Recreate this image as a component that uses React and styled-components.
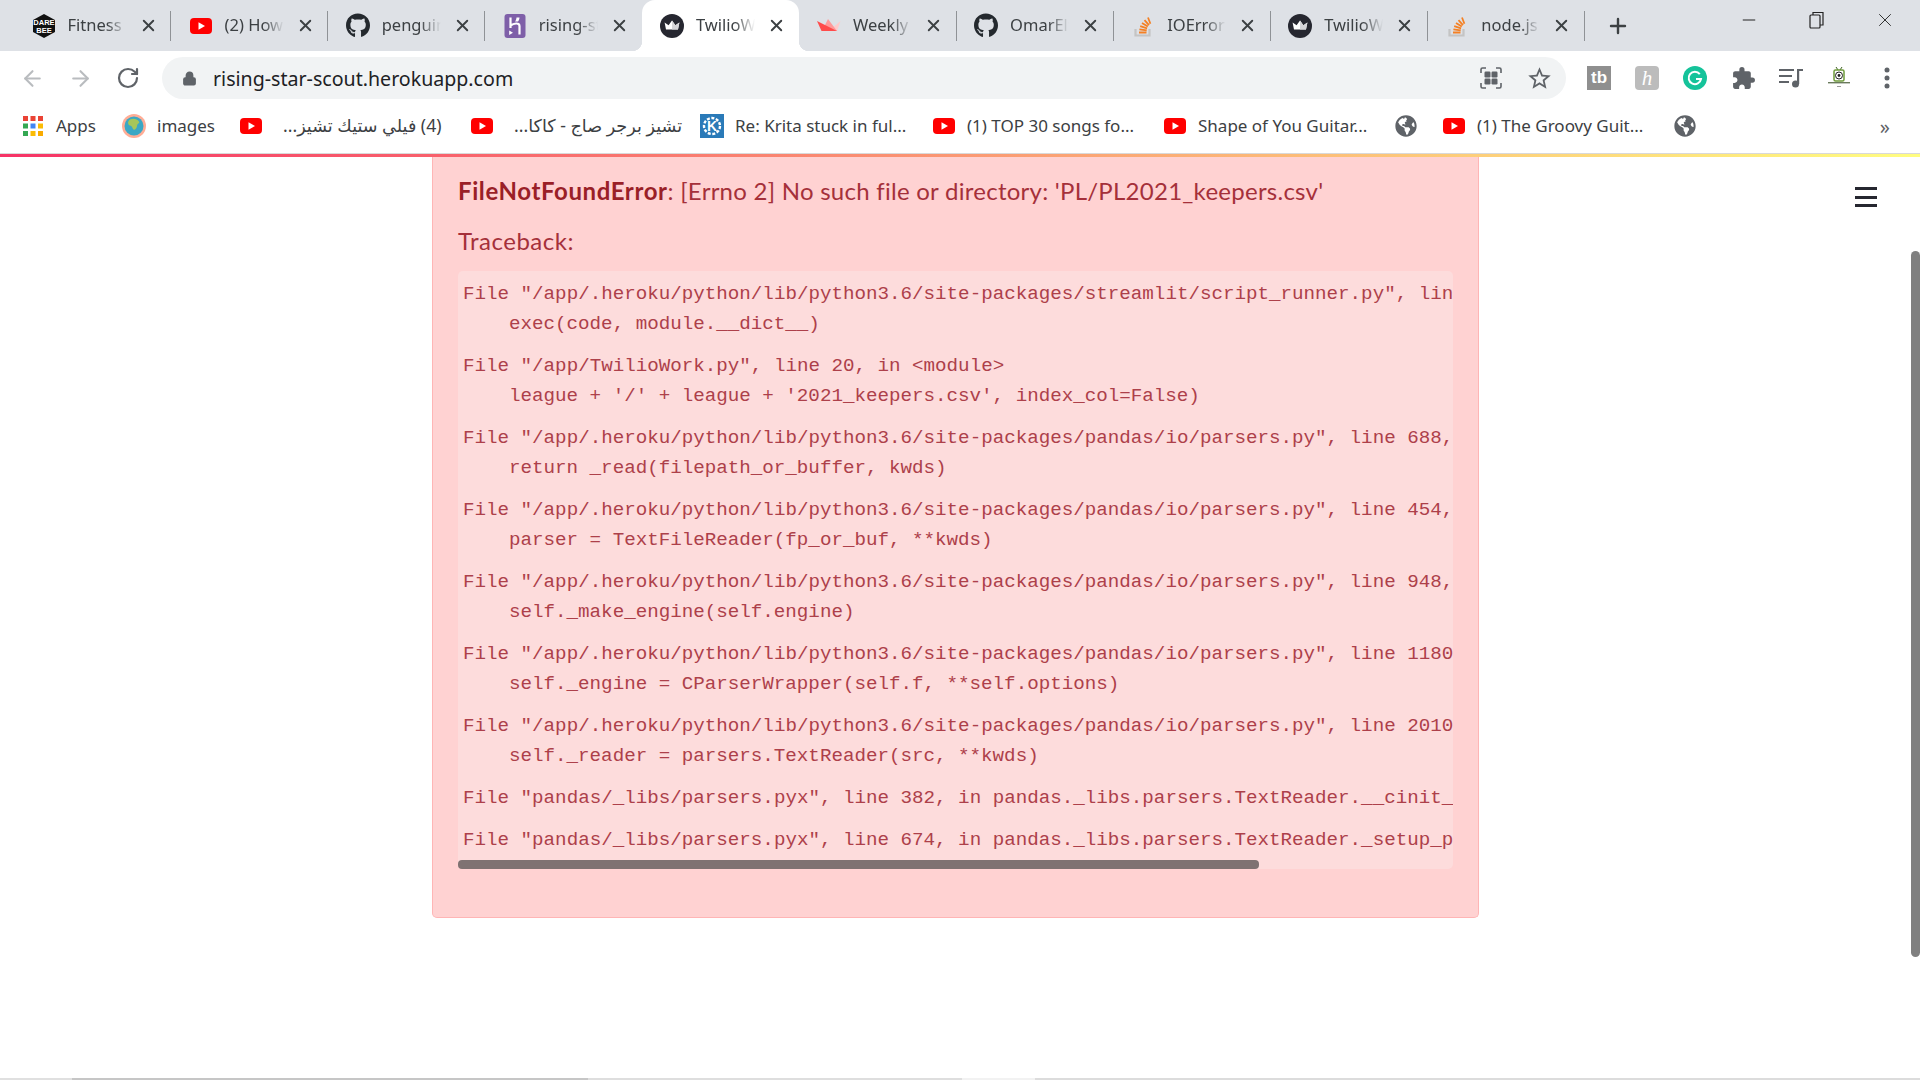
import React from "react";
import styled, { createGlobalStyle } from "styled-components";
import { FaGithub, FaGlobeAmericas } from "react-icons/fa";
import { MdExtension, MdStarBorder } from "react-icons/md";
import { ArrowLeft, ArrowRight, RotateCw, Lock, X, Plus, Minus } from "lucide-react";

const GlobalStyle = createGlobalStyle`
  html, body {
    margin: 0;
    padding: 0;
    height: 100%;
    background: #fff;
    overflow: hidden;
  }
  * {
    box-sizing: border-box;
  }
`;

const Youtube = () => (
  <svg width="24" height="24" viewBox="0 0 24 24">
    <rect x="1" y="4" width="22" height="16" rx="4" fill="#ff0000" />
    <path d="M9.500 8.200v7.600l6.500-3.800z" fill="#fff" />
  </svg>
);

const Crown = () => (
  <svg width="24" height="24" viewBox="0 0 24 24">
    <circle cx="12" cy="12" r="12" fill="#262730" />
    <path d="M6 15.500 4.600 8.600l4 2.600L12 6.400l3.400 4.800 4-2.600L18 15.500z" fill="#fff" />
    <path d="M12 6.400l3.400 4.800 4-2.600L18 15.500h-6z" fill="#d5d5d8" />
  </svg>
);

const Boat = () => (
  <svg width="24" height="24" viewBox="0 0 24 24">
    <path d="M23.500 7 20 17h-8z" fill="#ffcaca" />
    <path d="M11 5 5 17h15z" fill="#ff9a9a" />
    <path d="M0 7l4.500 10H20z" fill="#ff4b4b" />
  </svg>
);

const Stack = () => (
  <svg width="24" height="24" viewBox="0 0 24 24">
    <path d="M4.500 15v6.500h14V15" fill="none" stroke="#c4c4c4" strokeWidth="2.200" />
    <path d="M8 18.500h7.500M8.400 15.300l7.300 1M9.200 12.200l6.900 2.200M11 9l5.800 3.600M13.500 6.200l4.500 5M17 3.500l2.400 6.200" stroke="#f48024" strokeWidth="1.800" fill="none" />
  </svg>
);

const Dare = () => (
  <svg width="24" height="24" viewBox="0 0 24 24">
    <path d="M12 0 23 6v12l-11 6-11-6V6z" fill="#111" />
    <text x="12" y="11" textAnchor="middle" fontSize="7.500" fontWeight="700" fill="#fff" fontFamily="Liberation Sans, sans-serif">DARE</text>
    <text x="12" y="18.500" textAnchor="middle" fontSize="7.500" fontWeight="700" fill="#fff" fontFamily="Liberation Sans, sans-serif">BEE</text>
  </svg>
);

const Heroku = () => (
  <svg width="24" height="24" viewBox="0 0 24 24">
    <rect x="1.500" width="21" height="24" rx="3" fill="#7e5fa8" />
    <path d="M7.500 3.500v10.500M7.500 11.500c3-2 9-3.500 9 .5v8.500" fill="none" stroke="#fff" strokeWidth="2.200" />
    <path d="M6.200 16.500l3.800 2.200-3.800 2.300z" fill="#fff" />
    <path d="M13.500 3.500h3c0 1.500-.7 3-1.500 4h-3c.8-1 1.500-2.500 1.500-4z" fill="#fff" />
  </svg>
);

const Earth = () => (
  <svg width="24" height="24" viewBox="0 0 24 24">
    <circle cx="12" cy="12" r="12" fill="#ffad96" />
    <circle cx="12" cy="12" r="9.500" fill="#3ba7c4" />
    <path d="M8 5.500c3-1.500 7-1 9 2 1 2-2 2-2 4.500s-3 5-4 3-1-3-3-3.500-3-4 0-6z" fill="#a5c65a" />
  </svg>
);

const Kde = () => (
  <svg width="24" height="24" viewBox="0 0 24 24">
    <rect width="24" height="24" fill="#2a7ab8" />
    <circle cx="12" cy="12" r="8" fill="none" stroke="#fff" strokeWidth="2.400" strokeDasharray="3 1.600" />
    <text x="12" y="17" textAnchor="middle" fontSize="14" fontWeight="700" fill="#fff" fontFamily="Liberation Sans, sans-serif">K</text>
  </svg>
);

const AppsGrid = () => {
  const colors = ["#ea4335", "#ea4335", "#ea4335", "#34a853", "#4285f4", "#fbbc05", "#34a853", "#fbbc05", "#f9ab00"];
  return (
    <svg width="24" height="24" viewBox="0 0 24 24">
      {colors.map((c, i) => (
        <rect key={i} x={2 + (i % 3) * 7.5} y={2 + Math.floor(i / 3) * 7.5} width="5" height="5" fill={c} />
      ))}
    </svg>
  );
};

const Globe = () => <FaGlobeAmericas size={22} color="#5f6368" />;
const Github = () => <FaGithub size={25} color="#24292e" />;

const tabs = [
  { icon: <Dare />, title: "Fitness Freak" },
  { icon: <Youtube />, title: "(2) How to" },
  { icon: <Github />, title: "penguin-stats" },
  { icon: <Heroku />, title: "rising-star" },
  { icon: <Crown />, title: "TwilioWork", active: true },
  { icon: <Boat />, title: "Weekly" },
  { icon: <Github />, title: "OmarEltouny" },
  { icon: <Stack />, title: "IOError: [Errno" },
  { icon: <Crown />, title: "TwilioWork" },
  { icon: <Stack />, title: "node.js - error" },
];

const bookmarks = [
  { icon: <AppsGrid />, label: "Apps", width: 101 },
  { icon: <Earth />, label: "images", width: 117 },
  { icon: <Youtube />, label: "(4) فيلي ستيك تشيز...", width: 231, rtl: true },
  { icon: <Youtube />, label: "تشيز برجر صاج - كاكا...", width: 230, rtl: true },
  { icon: <Kde />, label: "Re: Krita stuck in ful...", width: 232 },
  { icon: <Youtube />, label: "(1) TOP 30 songs fo...", width: 231 },
  { icon: <Youtube />, label: "Shape of You Guitar...", width: 231 },
  { icon: <Globe />, width: 48 },
  { icon: <Youtube />, label: "(1) The Groovy Guit...", width: 231 },
  { icon: <Globe />, width: 48 },
];

const traces = [
  ['File "/app/.heroku/python/lib/python3.6/site-packages/streamlit/script_runner.py", line 332, in _run_script', "exec(code, module.__dict__)"],
  ['File "/app/TwilioWork.py", line 20, in <module>', "league + '/' + league + '2021_keepers.csv', index_col=False)"],
  ['File "/app/.heroku/python/lib/python3.6/site-packages/pandas/io/parsers.py", line 688, in read_csv', "return _read(filepath_or_buffer, kwds)"],
  ['File "/app/.heroku/python/lib/python3.6/site-packages/pandas/io/parsers.py", line 454, in _read', "parser = TextFileReader(fp_or_buf, **kwds)"],
  ['File "/app/.heroku/python/lib/python3.6/site-packages/pandas/io/parsers.py", line 948, in __init__', "self._make_engine(self.engine)"],
  ['File "/app/.heroku/python/lib/python3.6/site-packages/pandas/io/parsers.py", line 1180, in _make_engine', "self._engine = CParserWrapper(self.f, **self.options)"],
  ['File "/app/.heroku/python/lib/python3.6/site-packages/pandas/io/parsers.py", line 2010, in __init__', "self._reader = parsers.TextReader(src, **kwds)"],
  ['File "pandas/_libs/parsers.pyx", line 382, in pandas._libs.parsers.TextReader.__cinit__'],
  ['File "pandas/_libs/parsers.pyx", line 674, in pandas._libs.parsers.TextReader._setup_parser_source'],
];

const bottomSegments = [
  { width: 72, color: "#e0e0e0" },
  { width: 516, color: "#c6c6c6" },
  { width: 374, color: "#dedede" },
  { width: 73, color: "#f2f2f2" },
  { width: 885, color: "#dcdcdc" },
];

export default function App() {
  return (
    <Browser>
      <GlobalStyle />
      <TabStrip>
        {tabs.map((tab, i) => (
          <Tab key={i} $active={tab.active} $noLine={tabs[i + 1] && tabs[i + 1].active}>
            <Favicon>{tab.icon}</Favicon>
            <TabTitle>{tab.title}</TabTitle>
            <X size={19} strokeWidth={2.4} color="#3c4043" />
          </Tab>
        ))}
        <NewTab>
          <Plus size={24} strokeWidth={2.4} color="#3c4043" />
        </NewTab>
        <WindowControls>
          <WindowButton><Minus size={20} strokeWidth={1.2} color="#222" /></WindowButton>
          <WindowButton>
            <svg width="16" height="18" viewBox="0 0 16 18" fill="none" stroke="#222" strokeWidth="1.200">
              <rect x="1" y="4" width="10" height="13" rx="1" />
              <path d="M4 4V1.500h10V14h-3" />
            </svg>
          </WindowButton>
          <WindowButton><X size={22} strokeWidth={1} color="#222" /></WindowButton>
        </WindowControls>
      </TabStrip>

      <Toolbar>
        <NavButton><ArrowLeft size={25} strokeWidth={2} color="#b9bcbf" /></NavButton>
        <NavButton><ArrowRight size={25} strokeWidth={2} color="#b9bcbf" /></NavButton>
        <NavButton><RotateCw size={24} strokeWidth={2.2} color="#5f6368" /></NavButton>
        <AddressBar>
          <Lock size={15} fill="#5f6368" color="#5f6368" strokeWidth={2.4} />
          <Url>rising-star-scout.herokuapp.com</Url>
          <ActionButton>
            <svg width="22" height="22" viewBox="0 0 22 22" fill="#5f6368">
              <path d="M1 6V2.500A1.500 1.500 0 0 1 2.500 1H6M16 1h3.500A1.500 1.500 0 0 1 21 2.500V6M21 16v3.500a1.500 1.500 0 0 1-1.500 1.500H16M6 21H2.500A1.500 1.500 0 0 1 1 19.500V16" fill="none" stroke="#5f6368" strokeWidth="1.600" />
              <rect x="4.500" y="4.500" width="6" height="6" rx="1.200" />
              <rect x="11.500" y="4.500" width="6" height="6" rx="1.200" />
              <rect x="4.500" y="11.500" width="6" height="6" rx="1.200" />
              <rect x="11.500" y="11.500" width="6" height="6" rx="1.200" />
            </svg>
          </ActionButton>
          <ActionButton><MdStarBorder size={27} color="#5f6368" /></ActionButton>
        </AddressBar>
        <Extensions>
          <ActionButton><ExtSquare $bg="#8f8f8f" $radius="0">tb</ExtSquare></ActionButton>
          <ActionButton><ExtSquare $bg="#bcbcbc" $radius="4px" $serif>h</ExtSquare></ActionButton>
          <ActionButton>
            <svg width="24" height="24" viewBox="0 0 24 24">
              <circle cx="12" cy="12" r="12" fill="#15c39a" />
              <path d="M16.800 8.200A6.200 6.200 0 1 0 18 13h-5" fill="none" stroke="#fff" strokeWidth="2" />
            </svg>
          </ActionButton>
          <ActionButton><MdExtension size={25} color="#5f6368" /></ActionButton>
          <ActionButton>
            <svg width="24" height="24" viewBox="0 0 24 24" fill="#5f6368">
              <rect x="0" y="3" width="15" height="2" />
              <rect x="0" y="9" width="13" height="2" />
              <rect x="0" y="15" width="10" height="2" />
              <rect x="18" y="3" width="6" height="2" />
              <rect x="18" y="3" width="2.200" height="15" />
              <circle cx="16.500" cy="18" r="3.500" />
            </svg>
          </ActionButton>
          <ActionButton>
            <svg width="24" height="24" viewBox="0 0 24 24">
              <path d="M9 1l2 3M15 1l-2 3" stroke="#3d5f22" strokeWidth="1" />
              <rect x="7" y="4" width="10" height="11" rx="1.500" fill="none" stroke="#6d9a3a" strokeWidth="1.500" />
              <circle cx="12" cy="9.500" r="3.500" fill="#fff" stroke="#222" />
              <circle cx="12" cy="9.500" r="1.400" fill="#222" />
              <rect x="1" y="16" width="22" height="1.400" fill="#6a7a5c" />
              <rect x="10" y="20" width="4" height="1" fill="#999" />
            </svg>
          </ActionButton>
          <ActionButton>
            <svg width="6" height="24" viewBox="0 0 6 24" fill="#5f6368">
              <circle cx="3" cy="4" r="2.500" />
              <circle cx="3" cy="12" r="2.500" />
              <circle cx="3" cy="20" r="2.500" />
            </svg>
          </ActionButton>
        </Extensions>
      </Toolbar>

      <BookmarkBar>
        {bookmarks.map((b, i) => (
          <Bookmark key={i} $width={b.width}>
            <Favicon>{b.icon}</Favicon>
            {b.label && <BookmarkLabel dir={b.rtl ? "rtl" : "ltr"} $rtl={b.rtl}>{b.label}</BookmarkLabel>}
          </Bookmark>
        ))}
        <More>»</More>
      </BookmarkBar>

      <Content>
        <Decoration />
        <Main>
          <Alert>
            <Message><strong>FileNotFoundError</strong>: [Errno 2] No such file or directory: 'PL/PL2021_keepers.csv'</Message>
            <Heading>Traceback:</Heading>
            <CodeBlock>
              <CodeScroll>
                {traces.map((lines, i) => (
                  <Trace key={i}>
                    {lines.map((line, j) => (
                      <TraceLine key={j} $indent={j > 0}>{line}</TraceLine>
                    ))}
                  </Trace>
                ))}
              </CodeScroll>
              <CodeThumb />
            </CodeBlock>
          </Alert>
          <Hamburger>
            <span />
            <span />
            <span />
          </Hamburger>
        </Main>
        <ScrollRail>
          <ScrollThumb />
        </ScrollRail>
      </Content>

      <BottomStrip>
        {bottomSegments.map((s, i) => (
          <BottomSegment key={i} $width={s.width} $color={s.color} />
        ))}
      </BottomStrip>
    </Browser>
  );
}

const Browser = styled.div`
  display: flex;
  flex-direction: column;
  width: 1920px;
  height: 1080px;
  overflow: hidden;
  background: #fff;
  font-family: "Noto Sans", "DejaVu Sans", sans-serif;
`;

const TabStrip = styled.div`
  display: flex;
  align-items: stretch;
  height: 51px;
  padding-left: 14px;
  background: #dee1e6;
  flex-shrink: 0;
`;

const Tab = styled.div`
  position: relative;
  display: flex;
  align-items: center;
  width: 157.100px;
  padding: 0 13.500px 0 17.500px;
  gap: 12px;
  background: ${(p) => (p.$active ? "#fff" : "transparent")};
  border-radius: ${(p) => (p.$active ? "13px 13px 0 0" : "0")};
  z-index: ${(p) => (p.$active ? 1 : 0)};

  &::after {
    content: "";
    display: ${(p) => (p.$active || p.$noLine ? "none" : "block")};
    position: absolute;
    right: 0;
    top: 11px;
    width: 1px;
    height: 30px;
    background: #8f9296;
  }

  ${(p) =>
    p.$active &&
    `
    &::before {
      content: "";
      position: absolute;
      left: -10px;
      right: -10px;
      bottom: 0;
      height: 10px;
      z-index: -1;
      background:
        radial-gradient(circle at 0 0, #dee1e6 10px, transparent 10.5px) left bottom / 10px 10px no-repeat,
        radial-gradient(circle at 100% 0, #dee1e6 10px, transparent 10.5px) right bottom / 10px 10px no-repeat,
        linear-gradient(#fff, #fff) center / calc(100% - 20px) 100% no-repeat,
        #fff;
    }
  `}
`;

const Favicon = styled.span`
  display: flex;
  align-items: center;
  justify-content: center;
  width: 24px;
  height: 24px;
  flex-shrink: 0;
`;

const TabTitle = styled.span`
  flex: 1;
  min-width: 0;
  padding-bottom: 2px;
  overflow: hidden;
  white-space: nowrap;
  font-size: 16.500px;
  color: #3c4043;
  mask-image: linear-gradient(to right, #000 65%, transparent 100%);
`;

const NewTab = styled.div`
  display: flex;
  align-items: center;
  justify-content: center;
  width: 48px;
  margin-left: 9px;
`;

const WindowControls = styled.div`
  display: flex;
  margin-left: auto;
  padding-right: 1px;
  padding-bottom: 11px;
`;

const WindowButton = styled.div`
  display: flex;
  align-items: center;
  justify-content: center;
  width: 68px;
`;

const Toolbar = styled.div`
  display: flex;
  align-items: center;
  height: 54px;
  padding-left: 8px;
  flex-shrink: 0;
`;

const NavButton = styled.div`
  display: flex;
  align-items: center;
  justify-content: center;
  width: 48px;
`;

const AddressBar = styled.div`
  display: flex;
  align-items: center;
  flex: 1;
  height: 42px;
  margin-left: 10px;
  padding: 0 3px 0 20px;
  border-radius: 21px;
  background: #f1f3f4;
`;

const Url = styled.span`
  flex: 1;
  margin-left: 16px;
  font-size: 19.600px;
  color: #202124;
`;

const ActionButton = styled.div`
  display: flex;
  align-items: center;
  justify-content: center;
  width: 48px;
  height: 42px;
`;

const Extensions = styled.div`
  display: flex;
  margin-left: 9px;
  padding-right: 9px;
`;

const ExtSquare = styled.div`
  display: flex;
  align-items: center;
  justify-content: center;
  width: 24px;
  height: 24px;
  border-radius: ${(p) => p.$radius};
  background: ${(p) => p.$bg};
  color: #fff;
  font-family: ${(p) => (p.$serif ? '"Liberation Serif", serif' : '"Liberation Sans", sans-serif')};
  font-style: ${(p) => (p.$serif ? "italic" : "normal")};
  font-weight: ${(p) => (p.$serif ? 400 : 700)};
  font-size: ${(p) => (p.$serif ? "21px" : "17px")};
`;

const BookmarkBar = styled.div`
  display: flex;
  align-items: center;
  height: 48px;
  padding: 0 30px 6px 21px;
  flex-shrink: 0;
`;

const Bookmark = styled.div`
  display: flex;
  align-items: center;
  gap: 11px;
  width: ${(p) => p.$width}px;
  flex-shrink: 0;
`;

const BookmarkLabel = styled.span`
  margin-left: ${(p) => (p.$rtl ? "9px" : "0")};
  padding-bottom: 2px;
  white-space: nowrap;
  font-size: ${(p) => (p.$rtl ? "17.600px" : "17px")};
  color: #3c4043;
`;

const More = styled.span`
  margin-left: auto;
  font-size: 20px;
  color: #5f6368;
`;

const Content = styled.div`
  position: relative;
  display: flex;
  flex: 1;
  min-height: 0;
  border-top: 1px solid #d9d9d9;
`;

const Decoration = styled.div`
  position: absolute;
  top: 0;
  left: 0;
  right: 0;
  height: 3px;
  z-index: 2;
  background: linear-gradient(90deg, rgb(246, 51, 102), rgb(255, 253, 128));
`;

const Main = styled.main`
  position: relative;
  flex: 1;
  min-width: 0;
`;

const Alert = styled.div`
  width: 1047px;
  margin: 0 auto;
  padding: 19px 25px 48px 25px;
  border: 1px solid #ffb5b5;
  border-top: 0;
  border-radius: 0 0 5px 5px;
  background: #ffd2d2;
  color: #a5303a;
  font-family: Lato, "Noto Sans", sans-serif;
  font-size: 24px;
  letter-spacing: 0.26px;
  line-height: 36px;
`;

const Message = styled.div`
  margin-bottom: 14px;

  strong {
    font-weight: 700;
    letter-spacing: 0.6px;
    color: #9a1f27;
  }
`;

const Heading = styled.div`
  margin-bottom: 12px;
  letter-spacing: 0.5px;
`;

const CodeBlock = styled.div`
  border-radius: 5px;
  background: #fddcdc;
`;

const CodeScroll = styled.div`
  padding: 8px 0 5px 5px;
  overflow: hidden;
`;

const Trace = styled.div`
  margin-bottom: 12px;

  &:last-child {
    margin-bottom: 0;
  }
`;

const TraceLine = styled.div`
  padding-left: ${(p) => (p.$indent ? "46px" : "0")};
  font-family: "Liberation Mono", monospace;
  font-size: 19.200px;
  letter-spacing: 0;
  line-height: 30px;
  white-space: pre;
  color: #ad404a;
`;

const CodeThumb = styled.div`
  width: 801px;
  height: 9px;
  border-radius: 4px;
  background: #7f7272;
`;

const Hamburger = styled.div`
  position: absolute;
  top: 33px;
  right: 34px;
  display: flex;
  flex-direction: column;
  gap: 5.500px;
  width: 22px;

  span {
    height: 3px;
    background: #262730;
  }
`;

const ScrollRail = styled.div`
  width: 9px;
  flex-shrink: 0;
`;

const ScrollThumb = styled.div`
  height: 706px;
  margin-top: 97px;
  border-radius: 5px;
  background: #808080;
`;

const BottomStrip = styled.div`
  display: flex;
  height: 2px;
  flex-shrink: 0;
`;

const BottomSegment = styled.div`
  width: ${(p) => p.$width}px;
  background: ${(p) => p.$color};
`;
